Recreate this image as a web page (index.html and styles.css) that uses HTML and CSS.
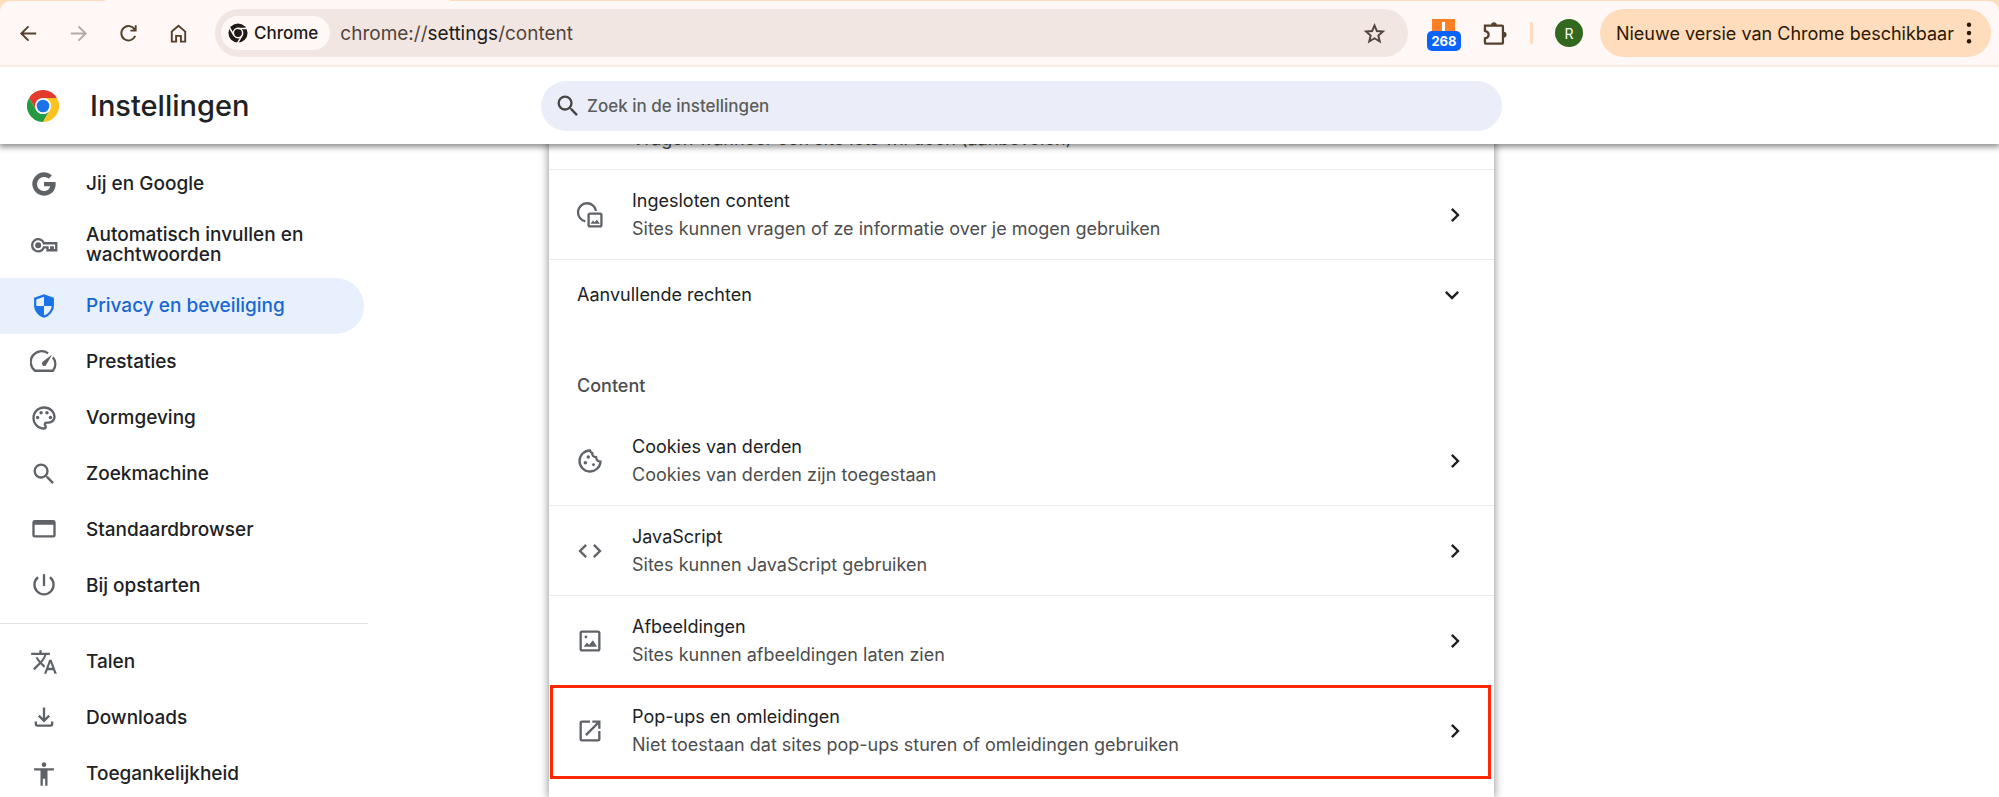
FILE: index.html
```html
<!DOCTYPE html>
<html lang="nl">
<head>
<meta charset="utf-8">
<title>Instellingen</title>
<link rel="stylesheet" href="styles.css">
</head>
<body>
<div class="browser">
  <div class="tabstrip"><div class="active-tab"></div></div>
  <div class="toolbar">
    <nav class="nav-buttons" aria-label="Navigatie">
      <button class="tool" aria-label="Vorige"><svg viewBox="0 0 24 24"><path d="M20 12H5M12 4.500 4.500 12l7.500 7.500"/></svg></button>
      <button class="tool disabled" aria-label="Volgende" disabled><svg viewBox="0 0 24 24"><path d="M4 12h15M12 4.500l7.500 7.500-7.500 7.500"/></svg></button>
      <button class="tool" aria-label="Vernieuwen"><svg viewBox="0 0 24 24"><path d="M19 14.500A7.500 7.500 0 1 1 18.500 8M19.500 3.500v5.500H14"/></svg></button>
      <button class="tool" aria-label="Startpagina"><svg viewBox="0 0 24 24"><path d="M5 10l7-6 7 6v10.500h-4.500v-6h-5v6H5z"/></svg></button>
    </nav>
    <div class="omnibox">
      <button class="chip"><svg class="chip-logo" viewBox="0 0 24 24"><circle cx="12" cy="12" r="11.500" fill="#201a17"/><circle cx="12" cy="12" r="5.600" fill="none" stroke="#fff8f6" stroke-width="1.800"/><path d="M12 6.500h10.500M7.200 14.800 2 6M16.800 14.800 11.500 24" stroke="#fff8f6" stroke-width="1.800"/></svg>Chrome</button>
      <div class="url" role="textbox" aria-label="Adres">chrome://<strong>settings</strong>/content</div>
      <button class="tool star" aria-label="Bookmark toevoegen"><svg viewBox="0 0 24 24"><path d="M12 3.500l2.500 5.900 6.300.5-4.800 4.200 1.500 6.200L12 17l-5.500 3.300L8 14.100 3.200 9.900l6.300-.5z"/></svg></button>
    </div>
    <div class="extensions">
      <button class="ext" aria-label="Extensie, 268"><span class="ext-mark"></span><span class="ext-badge">268</span></button>
      <button class="tool puzzle" aria-label="Extensies"><svg viewBox="0 0 24 24"><path d="M3.500 5h15.300q.7 0 .7.700v14.600q0 .7-.7.700H4.200q-.7 0-.7-.7v-4q3.300-.7 3.300-3.300T3.500 9.700z"/><path class="solid" d="M9 4.500a2.500 2.500 0 0 1 5 0zM20.200 10.500a2.500 2.500 0 0 1 0 5z"/></svg></button>
      <span class="separator"></span>
      <button class="avatar" aria-label="Profiel">R</button>
    </div>
    <button class="update">Nieuwe versie van Chrome beschikbaar<svg viewBox="0 0 6 24"><circle cx="3" cy="3" r="2.400"/><circle cx="3" cy="12" r="2.400"/><circle cx="3" cy="21" r="2.400"/></svg></button>
  </div>
</div>

<header class="header">
  <div class="brand">
    <svg class="brand-logo" viewBox="0 0 48 48"><circle cx="24" cy="24" r="23" fill="#fff"/><path fill="#e33b2e" d="M24 12h20.800A24 24 0 0 0 3.200 12l10.400 18L24 12z"/><path fill="#249a41" d="M34.400 30 24 48A24 24 0 0 1 3.200 12l10.400 18a12 12 0 0 0 20.800 0z"/><path fill="#fcc31e" d="M44.800 12A24 24 0 0 1 24 48l10.400-18A12 12 0 0 0 24 12z"/><circle cx="24" cy="24" r="12" fill="#fff"/><circle cx="24" cy="24" r="9.500" fill="#1a73e8"/></svg>
    <h1>Instellingen</h1>
  </div>
  <label class="search">
    <svg class="icon" viewBox="0 0 24 24"><path d="M15.500 14h-.79l-.28-.27A6.470 6.470 0 0 0 16 9.500 6.500 6.500 0 1 0 9.500 16c1.610 0 3.090-.59 4.230-1.570l.27.28v.79l5 4.990L20.490 19l-4.990-5zm-6 0a4.500 4.500 0 1 1 0-9 4.500 4.500 0 0 1 0 9z"/></svg>
    <input type="search" placeholder="Zoek in de instellingen" aria-label="Zoek in de instellingen">
  </label>
</header>

<div class="page">
  <nav class="sidebar" aria-label="Instellingen">
    <a href="#google"><svg class="icon" viewBox="0 0 24 24"><path d="M12 10.200v3.700h5.300c-.5 2.500-2.600 4.100-5.300 4.100a6 6 0 1 1 0-12c1.500 0 2.800.5 3.900 1.500L18.800 4.700A10 10 0 1 0 12 22c5.800 0 10-4 10-10 0-.6-.1-1.200-.2-1.800z"/></svg><span>Jij en Google</span></a>
    <a class="tall" href="#autofill"><svg class="icon line" viewBox="0 0 24 24"><path d="M11.900 10.500a5.200 5.200 0 1 0 0 3.500H15v2.500h3.200V14h1.300v2.500h3V10.500z"/><circle class="fill" cx="7" cy="12.200" r="2.600"/></svg><span>Automatisch invullen en wachtwoorden</span></a>
    <a class="selected" href="#privacy" aria-current="page"><svg class="icon" viewBox="0 0 24 24"><path fill-rule="evenodd" d="M12 2 3.500 5v6.300c0 5 3.500 9.300 8.500 10.700 5-1.400 8.500-5.700 8.500-10.700V5zM12 12h6.600c-.4 3.700-2.900 6.900-6.600 8zM12 4v8H5.400V6.400z"/></svg><span>Privacy en beveiliging</span></a>
    <a href="#performance"><svg class="icon line" viewBox="0 0 24 24"><path d="M15.500 4.600A9 9 0 0 0 4.300 19.500h15.400A9 9 0 0 0 19.600 8"/><path class="fill" d="M19 5.500l-5.300 9.200a2 2 0 1 1-2.900-2.900z"/></svg><span>Prestaties</span></a>
    <a href="#appearance"><svg class="icon" viewBox="0 0 24 24"><path d="M12 22C6.490 22 2 17.510 2 12S6.490 2 12 2s10 4.040 10 9c0 3.310-2.690 6-6 6h-1.770c-.28 0-.5.220-.5.500 0 .12.050.23.130.33.410.47.640 1.060.640 1.670A2.500 2.500 0 0 1 12 22zm0-18c-4.410 0-8 3.590-8 8s3.590 8 8 8c.28 0 .5-.22.5-.5a.54.54 0 0 0-.14-.35c-.41-.46-.63-1.050-.63-1.650a2.500 2.500 0 0 1 2.500-2.500H16c2.210 0 4-1.790 4-4 0-3.860-3.590-7-8-7z"/><circle cx="6.500" cy="11.500" r="1.500"/><circle cx="9.500" cy="7.500" r="1.500"/><circle cx="14.500" cy="7.500" r="1.500"/><circle cx="17.500" cy="11.500" r="1.500"/></svg><span>Vormgeving</span></a>
    <a href="#search"><svg class="icon" viewBox="0 0 24 24"><path d="M15.500 14h-.79l-.28-.27A6.470 6.470 0 0 0 16 9.500 6.500 6.500 0 1 0 9.500 16c1.610 0 3.090-.59 4.230-1.570l.27.28v.79l5 4.990L20.490 19l-4.990-5zm-6 0a4.500 4.500 0 1 1 0-9 4.500 4.500 0 0 1 0 9z"/></svg><span>Zoekmachine</span></a>
    <a href="#default"><svg class="icon" viewBox="0 0 24 24"><path fill-rule="evenodd" d="M4 3.500h16a2 2 0 0 1 2 2v11a2 2 0 0 1-2 2H4a2 2 0 0 1-2-2v-11a2 2 0 0 1 2-2zM4 7.500v9h16v-9z"/></svg><span>Standaardbrowser</span></a>
    <a href="#startup"><svg class="icon line" viewBox="0 0 24 24"><path d="M12 2v10M6.900 4.500a8.200 8.200 0 1 0 10.200 0"/></svg><span>Bij opstarten</span></a>
    <hr>
    <a href="#languages"><svg class="icon" viewBox="0 0 24 24"><path d="M12.870 15.070l-2.540-2.510.03-.03A17.520 17.520 0 0 0 14.070 6H17V4h-7V2H8v2H1v1.990h11.170C11.500 7.920 10.440 9.750 9 11.350 8.070 10.320 7.300 9.190 6.690 8h-2c.73 1.630 1.730 3.170 2.980 4.560l-5.090 5.020L4 19l5-5 3.110 3.110.76-2.040zM18.500 10h-2L12 22h2l1.120-3h4.750L21 22h2l-4.500-12zm-2.620 7l1.620-4.330L19.120 17h-3.240z"/></svg><span>Talen</span></a>
    <a href="#downloads"><svg class="icon line" viewBox="0 0 24 24"><path d="M12 3v11.500M7.500 10l4.500 4.500 4.500-4.500M5 15v2q0 1.500 1.500 1.500h11q1.500 0 1.500-1.500v-2"/></svg><span>Downloads</span></a>
    <a href="#accessibility"><svg class="icon" viewBox="0 0 24 24"><path d="M20.500 9H15v13h-2v-6h-2v6H9V9H3.500V7h17zM12 2a2 2 0 1 1 0 4 2 2 0 0 1 0-4z"/></svg><span>Toegankelijkheid</span></a>
  </nav>

  <main class="content">
    <div class="card">
      <a class="row" href="#handlers"><span class="icon"></span><span class="texts"><span class="title">Protocol-handlers</span><span class="sub">Vragen wanneer een site iets wil doen (aanbevolen)</span></span></a>
      <a class="row" href="#embedded"><svg class="icon line" viewBox="0 0 24 24"><path d="M8 17.400A7.800 7.800 0 1 1 17.200 8.500"/><rect x="10.800" y="10.800" width="11" height="11" rx="1.200"/><path class="fill" d="M12.500 19.500l2-2.700 1.500 1.500 2-2.300 2.500 3.500z" stroke="none"/></svg><span class="texts"><span class="title">Ingesloten content</span><span class="sub">Sites kunnen vragen of ze informatie over je mogen gebruiken</span></span><svg class="icon arrow" viewBox="0 0 24 24"><path d="M10 6 8.590 7.410 13.170 12l-4.580 4.590L10 18l6-6z"/></svg></a>
      <button class="row expand"><span class="title">Aanvullende rechten</span><svg class="icon arrow" viewBox="0 0 24 24"><path d="M16.590 8.590 12 13.170 7.410 8.590 6 10l6 6 6-6z"/></svg></button>
      <h2>Content</h2>
      <a class="row first" href="#cookies"><svg class="icon line" viewBox="0 0 24 24"><path d="M12 3a9 9 0 1 0 9 9.500q-3.500-.2-3.800-3.700-3.500-.3-3.200-3.500Q12.500 4.700 12 3z"/><circle class="fill" cx="10.500" cy="8.500" r="1.500"/><circle class="fill" cx="8" cy="13.500" r="1.500"/><circle class="fill" cx="15" cy="15.200" r="1.200"/></svg><span class="texts"><span class="title">Cookies van derden</span><span class="sub">Cookies van derden zijn toegestaan</span></span><svg class="icon arrow" viewBox="0 0 24 24"><path d="M10 6 8.590 7.410 13.170 12l-4.580 4.590L10 18l6-6z"/></svg></a>
      <a class="row" href="#javascript"><svg class="icon" viewBox="0 0 24 24"><path d="M9.400 16.600 4.800 12l4.600-4.600L8 6l-6 6 6 6zM14.600 16.600l4.600-4.600-4.600-4.600L16 6l6 6-6 6z"/></svg><span class="texts"><span class="title">JavaScript</span><span class="sub">Sites kunnen JavaScript gebruiken</span></span><svg class="icon arrow" viewBox="0 0 24 24"><path d="M10 6 8.590 7.410 13.170 12l-4.580 4.590L10 18l6-6z"/></svg></a>
      <a class="row" href="#images"><svg class="icon line" viewBox="0 0 24 24"><rect x="4" y="4" width="16" height="16" rx="1.200"/><path class="fill" stroke="none" d="M6.500 17l2.800-3.600 2 1.800 3.200-3.900 3.500 5.700z"/><circle class="fill" cx="8.500" cy="8.500" r="1.200"/></svg><span class="texts"><span class="title">Afbeeldingen</span><span class="sub">Sites kunnen afbeeldingen laten zien</span></span><svg class="icon arrow" viewBox="0 0 24 24"><path d="M10 6 8.590 7.410 13.170 12l-4.580 4.590L10 18l6-6z"/></svg></a>
      <a class="row marked" href="#popups"><svg class="icon" viewBox="0 0 24 24"><path d="M19 19H5V5h7V3H5a2 2 0 0 0-2 2v14a2 2 0 0 0 2 2h14a2 2 0 0 0 2-2v-7h-2v7zM14 3v2h3.590l-9.830 9.830 1.410 1.410L19 6.410V10h2V3h-7z"/></svg><span class="texts"><span class="title">Pop-ups en omleidingen</span><span class="sub">Niet toestaan dat sites pop-ups sturen of omleidingen gebruiken</span></span><svg class="icon arrow" viewBox="0 0 24 24"><path d="M10 6 8.590 7.410 13.170 12l-4.580 4.590L10 18l6-6z"/></svg></a>
    </div>
  </main>
</div>
</body>
</html>
```
FILE: styles.css
```css
* { box-sizing: border-box; }
body {
  margin: 0;
  height: 100vh;
  display: flex;
  flex-direction: column;
  overflow: hidden;
  background: #fff;
  color: #202124;
  font-family: Inter, "Liberation Sans", sans-serif;
  font-size: 18px;
}
button { border: 0; padding: 0; background: none; font: inherit; color: inherit; }
a { color: inherit; text-decoration: none; }

/* Browser toolbar */
.browser {
  position: relative;
  z-index: 2;
  background: #ffdcbc;
  border-bottom: 2px solid #fae9e0;
}
.tabstrip { height: 1px; padding-left: 105px; }
.active-tab { width: 345px; height: 1px; background: #fff8f6; }
.toolbar {
  height: 64px;
  display: flex;
  align-items: center;
  padding: 0 8px 0 12px;
  background: #fff8f6;
  border-radius: 10px 10px 0 0;
}
.nav-buttons { display: flex; gap: 18px; margin-right: 21px; }
.tool { width: 32px; height: 32px; display: grid; place-items: center; color: #55402b; }
.tool svg { width: 23px; height: 23px; fill: none; stroke: currentColor; stroke-width: 2; }
.tool .solid { fill: currentColor; stroke: none; }
.puzzle svg { width: 27px; height: 27px; }
.tool.disabled { color: #b3a9a5; }
.star { color: #51443b; }
.omnibox {
  flex: 1;
  height: 48px;
  display: flex;
  align-items: center;
  padding: 0 17px 0 6px;
  border-radius: 24px;
  background: #f1e6e2;
}
.chip {
  height: 34px;
  display: flex;
  align-items: center;
  gap: 6px;
  padding: 0 12px 0 7px;
  border-radius: 17px;
  background: #fff8f6;
  font-size: 17px;
  font-weight: 500;
  color: #201a17;
}
.chip-logo { width: 20px; height: 20px; }
.url { flex: 1; margin-left: 10px; font-size: 19px; color: #51443b; }
.url strong { font-weight: 400; color: #201a17; }
.extensions { display: flex; align-items: center; margin-left: 19px; }
.ext { width: 34px; height: 36px; display: flex; flex-direction: column; align-items: center; justify-content: flex-end; margin-right: 18px; }
.ext-mark {
  width: 23px;
  height: 12px;
  background: linear-gradient(#fff, #fff) center bottom / 3px 9px no-repeat, #ff7f27;
}
.ext-badge {
  width: 34px;
  height: 20px;
  border-radius: 5px;
  background: #0a63ff;
  color: #fff;
  font-size: 13px;
  font-weight: 700;
  line-height: 20px;
}
.separator { width: 3px; height: 22px; margin: 0 22px 0 19px; border-radius: 1px; background: #ffdcbc; }
.avatar { width: 28px; height: 28px; border-radius: 50%; background: #33691e; color: #fff; font-size: 14px; }
.update {
  height: 48px;
  display: flex;
  align-items: center;
  gap: 12px;
  margin-left: 17px;
  padding: 0 19px 0 16px;
  border-radius: 24px;
  background: #ffdcbc;
  color: #2b1700;
}
.update svg { width: 6px; height: 22px; fill: currentColor; }

/* Settings header */
.header, .page {
  display: grid;
  grid-template-columns: minmax(368px, 549fr) minmax(0, 945fr) minmax(0, 505fr);
}
.header {
  position: relative;
  z-index: 1;
  height: 77px;
  flex: none;
  align-items: center;
  background: #fff;
  box-shadow: 0 2px 6px 1px rgba(0, 0, 0, .45);
}
.brand { display: flex; align-items: center; gap: 31px; padding-left: 27px; }
.brand-logo { width: 32px; height: 32px; }
h1 { margin: 0; font-size: 29px; font-weight: 500; }
.search {
  height: 50px;
  display: flex;
  align-items: center;
  gap: 5px;
  margin: 0 -8px;
  padding: 0 13px;
  border-radius: 25px;
  background: #ebeef8;
}
.search input {
  flex: 1;
  padding: 0;
  border: 0;
  outline: 0;
  background: none;
  font: 500 17px Inter, "Liberation Sans", sans-serif;
}
.search input::placeholder { color: #5a5d5c; opacity: 1; }
.icon { width: 28px; height: 28px; flex: none; fill: #5f6368; }
.search .icon { fill: #474747; }
.line { fill: none; stroke: #5f6368; stroke-width: 2; }
.line .fill { fill: #5f6368; stroke: none; }

/* Side menu */
.page { flex: 1; min-height: 0; overflow: hidden; }
.sidebar {
  width: 368px;
  min-height: 0;
  padding-top: 12px;
  font-size: 19px;
  font-weight: 500;
  line-height: 20px;
}
.sidebar a {
  height: 56px;
  display: flex;
  align-items: center;
  gap: 28px;
  width: 364px;
  padding: 0 36px 0 30px;
  border-radius: 0 28px 28px 0;
}
.sidebar .tall { height: 66px; }
.sidebar .selected { background: #e8f0fe; color: #1967d2; }
.sidebar .selected .icon { fill: #1a73e8; }
.sidebar hr { margin: 9px 0 10px; border: 0; border-top: 1px solid #e4e4e4; }

/* Content settings */
.content { min-height: 0; }
.card {
  height: calc(100% + 65px);
  margin-top: -65px;
  background: #fff;
  box-shadow: 0 0 8px 1px rgba(0, 0, 0, .4);
}
.row {
  width: 100%;
  height: 90px;
  display: flex;
  align-items: center;
  padding: 0 25px 0 27px;
  border-top: 1px solid #ececec;
}
.row.first { border-color: transparent; }
.texts { flex: 1; display: flex; flex-direction: column; margin-left: 28px; }
.title, .sub { line-height: 28px; white-space: nowrap; }
.sub { color: #4d4d4d; }
.arrow { fill: #1f1f1f; }
.expand { height: 70px; justify-content: space-between; padding: 0 28px; }
h2 { margin: 44px 28px 16px; font-size: 18px; font-weight: 500; line-height: 26px; color: #4d4d4d; }
.row.marked {
  position: relative;
  height: 91px;
}
.row.marked::after {
  content: "";
  position: absolute;
  inset: -1px 3px -3px 1px;
  border: 3px solid #ff2600;
}
```
